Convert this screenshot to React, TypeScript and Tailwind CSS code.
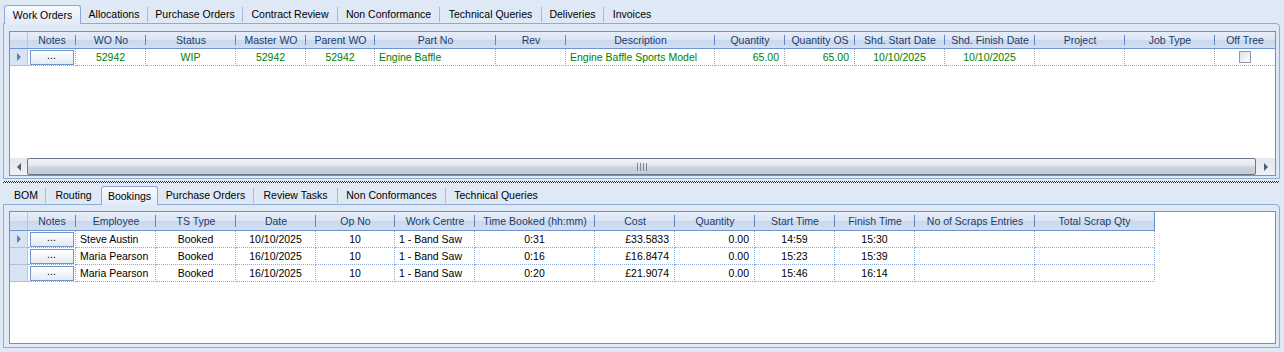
import React from "react";

type Align = "l" | "c" | "r";
type Col = { w: string; label: string; a?: Align; v?: string; kind?: "notes" | "check" };

const ALIGN: Record<Align, string> = {
  l: "justify-start pl-[4px]",
  c: "justify-center",
  r: "justify-end pr-[5px]",
};

const TOP_COLS: Col[] = [
  { w: "w-[48px]", label: "Notes", kind: "notes" },
  { w: "w-[70px]", label: "WO No", a: "c", v: "52942" },
  { w: "w-[90px]", label: "Status", a: "c", v: "WIP" },
  { w: "w-[70px]", label: "Master WO", a: "c", v: "52942" },
  { w: "w-[69px]", label: "Parent WO", a: "c", v: "52942" },
  { w: "w-[121px]", label: "Part No", a: "l", v: "Engine Baffle" },
  { w: "w-[70px]", label: "Rev", a: "l", v: "" },
  { w: "w-[149px]", label: "Description", a: "l", v: "Engine Baffle Sports Model" },
  { w: "w-[70px]", label: "Quantity", a: "r", v: "65.00" },
  { w: "w-[70px]", label: "Quantity OS", a: "r", v: "65.00" },
  { w: "w-[90px]", label: "Shd. Start Date", a: "c", v: "10/10/2025" },
  { w: "w-[90px]", label: "Shd. Finish Date", a: "c", v: "10/10/2025" },
  { w: "w-[90px]", label: "Project", a: "l", v: "" },
  { w: "w-[90px]", label: "Job Type", a: "l", v: "" },
  { w: "w-[60px]", label: "Off Tree", kind: "check" },
];

const BOT_COLS: { w: string; label: string; a: Align }[] = [
  { w: "w-[48px]", label: "Notes", a: "c" },
  { w: "w-[80px]", label: "Employee", a: "l" },
  { w: "w-[80px]", label: "TS Type", a: "c" },
  { w: "w-[80px]", label: "Date", a: "c" },
  { w: "w-[79px]", label: "Op No", a: "c" },
  { w: "w-[80px]", label: "Work Centre", a: "l" },
  { w: "w-[120px]", label: "Time Booked (hh:mm)", a: "c" },
  { w: "w-[80px]", label: "Cost", a: "r" },
  { w: "w-[80px]", label: "Quantity", a: "r" },
  { w: "w-[80px]", label: "Start Time", a: "c" },
  { w: "w-[80px]", label: "Finish Time", a: "c" },
  { w: "w-[120px]", label: "No of Scraps Entries", a: "c" },
  { w: "w-[120px]", label: "Total Scrap Qty", a: "c" },
];

const BOT_ROWS: string[][] = [
  ["", "Steve Austin", "Booked", "10/10/2025", "10", "1 - Band Saw", "0:31", "£33.5833", "0.00", "14:59", "15:30", "", ""],
  ["", "Maria Pearson", "Booked", "16/10/2025", "10", "1 - Band Saw", "0:16", "£16.8474", "0.00", "15:23", "15:39", "", ""],
  ["", "Maria Pearson", "Booked", "16/10/2025", "10", "1 - Band Saw", "0:20", "£21.9074", "0.00", "15:46", "16:14", "", ""],
];

const HEADER_BG =
  "bg-[linear-gradient(to_bottom,#e6edf8_0%,#dbe5f4_48%,#cad8ee_52%,#d3dff1_100%)]";

function Tabs({ tabs, active, lead }: { tabs: { label: string; w: string }[]; active: number; lead: string }) {
  return (
    <div className={`flex h-[18px] items-end ${lead}`}>
      {tabs.map((t, i) =>
        i === active ? (
          <div
            key={t.label}
            className={`${t.w} relative z-10 -mb-px flex h-[19px] shrink-0 items-center justify-center rounded-t-[3px] border border-b-0 border-[#8ba8d6] bg-[linear-gradient(to_bottom,#f6f9fd,#e4ecf8)] pt-px text-black`}
          >
            {t.label}
          </div>
        ) : (
          <div
            key={t.label}
            className={`${t.w} flex h-[18px] shrink-0 items-center justify-center text-black`}
          >
            <span className="flex h-[15px] w-full items-center justify-center border-[#a3b6d4] last:border-0">
              {t.label}
            </span>
          </div>
        )
      )}
    </div>
  );
}

function Sep({ show }: { show: boolean }) {
  return show ? <div className="mb-px h-[15px] w-px shrink-0 self-end bg-[#a7b9d6]" /> : null;
}

function TabStrip({ tabs, active, lead }: { tabs: { label: string; w: string }[]; active: number; lead: string }) {
  return (
    <div className={`flex h-[18px] items-end ${lead}`}>
      {tabs.map((t, i) => {
        const isActive = i === active;
        const showSep = !isActive && i + 1 !== active && i !== tabs.length - 1;
        return (
          <React.Fragment key={t.label}>
            {isActive ? (
              <div
                className={`${t.w} relative z-10 -mb-px flex h-[19px] shrink-0 items-center justify-center rounded-t-[3px] border border-b-0 border-[#8ba8d6] bg-[linear-gradient(to_bottom,#f6f9fd,#e3ebf8)] pt-px text-black`}
              >
                {t.label}
              </div>
            ) : (
              <div className={`${t.w} flex h-[18px] shrink-0 items-center justify-center pt-px text-black`}>{t.label}</div>
            )}
            <Sep show={showSep} />
          </React.Fragment>
        );
      })}
    </div>
  );
}

function NotesButton() {
  return (
    <div className="flex h-[15px] w-[44px] items-center justify-center border border-[#7094cd] bg-[linear-gradient(to_bottom,#ffffff,#e3eaf5)] pb-[3px] text-black">
      ...
    </div>
  );
}

function RowHeader({ current, last }: { current?: boolean; last?: boolean }) {
  return (
    <div
      className={`flex h-[17px] w-[18px] shrink-0 items-center justify-center border-r border-b border-r-[#b4c7e5] ${
        last ? "border-b-[#aebfdc]" : "border-b-[#aebfdc]"
      } bg-[#d8e3f3]`}
    >
      {current ? (
        <div className="h-0 w-0 border-y-[4px] border-l-[4px] border-y-transparent border-l-[#5b80b9]" />
      ) : null}
    </div>
  );
}

function HeaderCell({ w, label, sep = true, full = false }: { w: string; label: string; sep?: boolean; full?: boolean }) {
  return (
    <div
      className={`${w} relative flex h-full shrink-0 items-center justify-center text-[#1c3b6c] ${
        full ? "border-r border-[#6a90cc]" : ""
      }`}
    >
      {label}
      {sep && !full ? <span className="absolute top-[3px] right-0 bottom-[3px] w-px bg-[#5f87c6]" /> : null}
    </div>
  );
}

function TopGrid() {
  return (
    <div className="ml-[5px] flex h-[145px] w-[1267px] flex-col border border-[#6b92cf] bg-white">
      <div className={`flex h-[17px] shrink-0 border-b border-[#6f95d0] ${HEADER_BG}`}>
        <div className="h-full w-[18px] shrink-0 border-r border-[#b4c7e5]" />
        {TOP_COLS.map((c, i) => (
          <HeaderCell key={c.label} w={c.w} label={c.label} sep={i !== TOP_COLS.length - 1} />
        ))}
      </div>
      <div className="flex h-[17px] shrink-0">
        <RowHeader current />
        {TOP_COLS.map((c, i) => (
          <div
            key={c.label}
            className={`${c.w} flex h-[17px] shrink-0 items-center border-b border-dotted border-[#88ace0] ${
              i !== TOP_COLS.length - 1 ? "border-r" : ""
            } ${c.kind ? "justify-center" : ALIGN[c.a ?? "l"]} text-[#008000]`}
          >
            {c.kind === "notes" ? (
              <NotesButton />
            ) : c.kind === "check" ? (
              <div className="h-[12px] w-[12px] border border-[#8e99a9] bg-[linear-gradient(135deg,#dcdfe4,#ffffff)]" />
            ) : (
              c.v
            )}
          </div>
        ))}
      </div>
      <div className="mt-auto flex h-[17px] shrink-0 bg-[linear-gradient(to_bottom,#e3e7ee,#eef1f5)]">
        <div className="flex w-[17px] shrink-0 items-center justify-center">
          <div className="h-0 w-0 border-y-[4px] border-r-[4px] border-y-transparent border-r-[#4d5c74]" />
        </div>
        <div className="flex flex-1 items-center justify-center rounded-[2px] border border-[#6c7789] bg-[linear-gradient(to_bottom,#f1f3f6_0%,#e2e6ec_45%,#cdd4de_55%,#c3cbd7_100%)]">
          <div className="flex h-[8px] gap-[2px]">
            <div className="h-full w-px bg-[#7a8494]" />
            <div className="h-full w-px bg-[#7a8494]" />
            <div className="h-full w-px bg-[#7a8494]" />
            <div className="h-full w-px bg-[#7a8494]" />
          </div>
        </div>
        <div className="flex w-[19px] shrink-0 items-center justify-center">
          <div className="h-0 w-0 border-y-[4px] border-l-[4px] border-y-transparent border-l-[#4d5c74]" />
        </div>
      </div>
    </div>
  );
}

function BottomGrid() {
  return (
    <div className="ml-[5px] flex h-[133px] w-[1267px] flex-col border border-[#6b92cf] bg-white">
      <div className="flex h-[19px] shrink-0">
        <div className={`flex ${HEADER_BG} border-b border-[#6f95d0]`}>
          <div className="h-full w-[18px] shrink-0 border-r border-[#b4c7e5]" />
          {BOT_COLS.map((c, i) => (
            <HeaderCell key={c.label} w={c.w} label={c.label} full={i === BOT_COLS.length - 1} />
          ))}
        </div>
      </div>
      {BOT_ROWS.map((r, ri) => (
        <div key={ri} className="flex h-[17px] shrink-0">
          <RowHeader current={ri === 0} last={ri === BOT_ROWS.length - 1} />
          {BOT_COLS.map((c, ci) => (
            <div
              key={c.label}
              className={`${c.w} flex h-[17px] shrink-0 items-center border-r border-b border-dotted border-[#88ace0] ${ALIGN[c.a]} text-black`}
            >
              {ci === 0 ? <NotesButton /> : r[ci]}
            </div>
          ))}
        </div>
      ))}
    </div>
  );
}

const TOP_TABS = [
  { label: "Work Orders", w: "w-[77px]" },
  { label: "Allocations", w: "w-[66px]" },
  { label: "Purchase Orders", w: "w-[94px]" },
  { label: "Contract Review", w: "w-[94px]" },
  { label: "Non Conformance", w: "w-[101px]" },
  { label: "Technical Queries", w: "w-[101px]" },
  { label: "Deliveries", w: "w-[61px]" },
  { label: "Invoices", w: "w-[56px]" },
];

const BOT_TABS = [
  { label: "BOM", w: "w-[38px]" },
  { label: "Routing", w: "w-[55px]" },
  { label: "Bookings", w: "w-[57px]" },
  { label: "Purchase Orders", w: "w-[95px]" },
  { label: "Review Tasks", w: "w-[83px]" },
  { label: "Non Conformances", w: "w-[107px]" },
  { label: "Technical Queries", w: "w-[100px]" },
];

export default function App() {
  return (
    <div className="flex h-[352px] w-[1284px] flex-col overflow-hidden bg-[#dfe9f6] px-[3px] pt-[5px] font-['Liberation_Sans',Arial,sans-serif] text-[10.5px] leading-none">
      <TabStrip tabs={TOP_TABS} active={0} lead="pl-[1px]" />
      <div className="h-[156px] w-[1277px] shrink-0 rounded-tr-[4px] border border-[#8eaad6] pt-[7px]">
        <TopGrid />
      </div>
      <div className="mt-[2px] h-[2px] w-[1276px] shrink-0 bg-[conic-gradient(#2a2a2a_25%,#f4f4f4_0_50%,#2a2a2a_0_75%,#f4f4f4_0)] bg-[length:2px_2px]" />
      <div className="mt-[3px]">
        <TabStrip tabs={BOT_TABS} active={2} lead="pl-[4px]" />
      </div>
      <div className="h-[144px] w-[1277px] shrink-0 rounded-tr-[4px] border border-[#8eaad6] pt-[6px]">
        <BottomGrid />
      </div>
    </div>
  );
}
